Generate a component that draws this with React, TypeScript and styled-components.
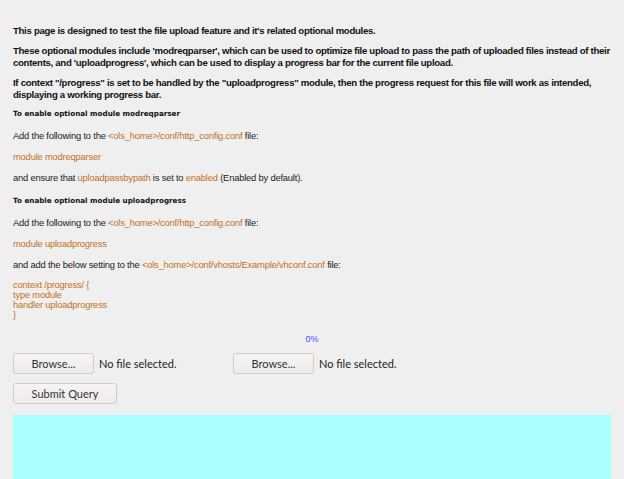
import * as React from 'react';
import styled, { createGlobalStyle } from 'styled-components';

const GlobalStyle = createGlobalStyle`
  html, body {
    margin: 0;
    padding: 0;
    background: #efefef;
  }
  body {
    font-family: "Liberation Sans", Arial, sans-serif;
    color: #222;
  }
`;

const Page = styled.div`
  width: 602px;
  padding: 25px 0 0 13px;
`;

const Intro = styled.p`
  margin: 0 0 8px;
  font-size: 9.6px;
  line-height: 12px;
  font-weight: bold;
  letter-spacing: -0.3px;
  color: #111;
`;

const Heading = styled.h4<{ $first?: boolean }>`
  margin: ${(p) => (p.$first ? '8px' : '12px')} 0 12px;
  font-family: "DejaVu Sans", Verdana, sans-serif;
  font-size: 7.2px;
  line-height: 9px;
  font-weight: bold;
  color: #111;
`;

const Text = styled.p`
  margin: 0 0 9.5px;
  font-size: 9.4px;
  line-height: 11.5px;
  letter-spacing: -0.2px;
`;

const Code = styled.span`
  color: #c4711f;
`;

const CodeBlock = styled.div`
  margin: 0;
  font-size: 9.4px;
  line-height: 10.3px;
  color: #c4711f;
  letter-spacing: -0.2px;
`;

const Percent = styled.div`
  text-align: center;
  width: 598px;
  font-size: 9px;
  line-height: 11px;
  color: #4d4dff;
  margin: 13px 0 8px;
`;

const FileRow = styled.div`
  display: flex;
  align-items: center;
  gap: 20px;
`;

const FileField = styled.div`
  display: flex;
  align-items: center;
  gap: 5px;
  width: 200px;
`;

const Button = styled.button<{ $wide?: boolean }>`
  box-sizing: border-box;
  height: 21px;
  width: ${(p) => (p.$wide ? '104px' : '81px')};
  padding: 0;
  border: 1px solid #cfcdca;
  border-radius: 3px;
  background: linear-gradient(#f6f5f4, #edebe9);
  font-family: "Lato", "Open Sans", sans-serif;
  font-size: 11px;
  color: #2e3436;
`;

const NoFile = styled.span`
  font-family: "Lato", "Open Sans", sans-serif;
  font-size: 11px;
  color: #222;
`;

const SubmitRow = styled.div`
  margin: 9px 0 11px;
`;

const Progress = styled.div`
  width: 598px;
  height: 80px;
  background: #aaffff;
`;

export default function App() {
  return (
    <>
      <GlobalStyle />
      <Page>
        <Intro>This page is designed to test the file upload feature and it's related optional modules.</Intro>
        <Intro>
          These optional modules include 'modreqparser', which can be used to optimize file upload to pass the path of uploaded files instead of their
          contents, and 'uploadprogress', which can be used to display a progress bar for the current file upload.
        </Intro>
        <Intro>
          If context "/progress" is set to be handled by the "uploadprogress" module, then the progress request for this file will work as intended,
          displaying a working progress bar.
        </Intro>

        <Heading $first>To enable optional module modreqparser</Heading>
        <Text>
          Add the following to the <Code>&lt;ols_home&gt;/conf/http_config.conf</Code> file:
        </Text>
        <Text>
          <Code>module modreqparser</Code>
        </Text>
        <Text>
          and ensure that <Code>uploadpassbypath</Code> is set to <Code>enabled</Code> (Enabled by default).
        </Text>

        <Heading>To enable optional module uploadprogress</Heading>
        <Text>
          Add the following to the <Code>&lt;ols_home&gt;/conf/http_config.conf</Code> file:
        </Text>
        <Text>
          <Code>module uploadprogress</Code>
        </Text>
        <Text>
          and add the below setting to the <Code>&lt;ols_home&gt;/conf/vhosts/Example/vhconf.conf</Code> file:
        </Text>
        <CodeBlock>
          {'context /progress/ {'}<br />
          type module<br />
          handler uploadprogress<br />
          {'}'}
        </CodeBlock>

        <Percent>0%</Percent>
        <FileRow>
          <FileField>
            <Button>Browse...</Button>
            <NoFile>No file selected.</NoFile>
          </FileField>
          <FileField>
            <Button>Browse...</Button>
            <NoFile>No file selected.</NoFile>
          </FileField>
        </FileRow>
        <SubmitRow>
          <Button $wide>Submit Query</Button>
        </SubmitRow>
        <Progress />
      </Page>
    </>
  );
}
